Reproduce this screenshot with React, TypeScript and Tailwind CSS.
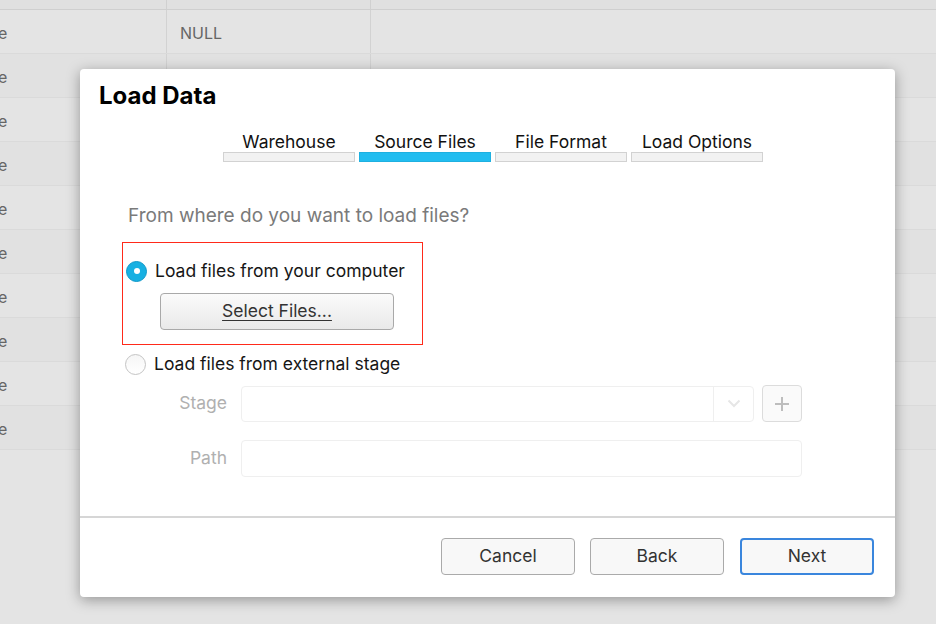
import React from "react";

const rows = Array.from({ length: 10 }, (_, i) => i);

function Tab({ label, active }: { label: string; active?: boolean }) {
  return (
    <div className="flex flex-col items-center w-[132px]">
      <div className="text-[17.5px] leading-[20px] text-[#111]">{label}</div>
      <div
        className={
          active
            ? "w-full h-[10px] bg-[#22bdf0] border border-[#1fb0e0]"
            : "w-full h-[10px] bg-[#f2f2f2] border border-[#d2d2d2]"
        }
      />
    </div>
  );
}

export default function App() {
  return (
    <div
      className="relative w-[936px] h-[624px] overflow-hidden bg-[#e4e4e4]"
      style={{ fontFamily: "Inter, 'Noto Sans', 'Liberation Sans', sans-serif" }}
    >
      {/* background grid */}
      <div className="flex flex-col">
        <div className="h-[10px] flex border-b border-[#cfcfcf] bg-[#e0e0e0]">
          <div className="w-[167px] border-r border-[#d0d0d0]" />
          <div className="w-[204px] border-r border-[#d0d0d0]" />
          <div className="flex-1" />
        </div>
        {rows.map((i) => (
          <div
            key={i}
            className={
              "h-[44px] flex border-b border-[#dadada] " +
              (i % 2 === 0 ? "bg-[#e4e4e4]" : "bg-[#e1e1e1]")
            }
          >
            <div className="w-[167px] border-r border-[#d2d2d2] flex items-center pt-[3px] overflow-hidden">
              <span className="text-[16px] text-[#666] ml-[-2px]">e</span>
            </div>
            <div className="w-[204px] border-r border-[#d2d2d2] flex items-center pt-[3px] pl-[13px]">
              {i === 0 && <span className="text-[16px] text-[#666]">NULL</span>}
            </div>
            <div className="flex-1" />
          </div>
        ))}
      </div>

      {/* dialog */}
      <div className="absolute left-[80px] top-[69px] w-[815px] h-[528px] bg-white rounded-[4px] shadow-[0_3px_14px_rgba(0,0,0,0.35)] flex flex-col">
        <div className="px-[19px] pt-[13px]">
          <h1 className="text-[24px] leading-[28px] font-bold text-black">Load Data</h1>
        </div>
        <div className="flex justify-center gap-[4px] mt-[22px] ml-[11px]">
          <Tab label="Warehouse" />
          <Tab label="Source Files" active />
          <Tab label="File Format" />
          <Tab label="Load Options" />
        </div>

        <div className="pl-[48px] mt-[43px] text-[19px] leading-[22px] text-[#7a7a7a]">
          From where do you want to load files?
        </div>

        <div className="ml-[42px] mt-[15px] w-[301px] h-[103px] border border-[#ff2a1a] flex flex-col pt-[17px] pl-[3px]">
          <div className="flex items-center gap-[8px]">
            <div className="w-[21px] h-[21px] rounded-full bg-[#17b0e2] border border-[#1098c8] flex items-center justify-center">
              <div className="w-[6px] h-[6px] rounded-full bg-white" />
            </div>
            <span className="text-[17.5px] leading-[22px] text-[#161616]">Load files from your computer</span>
          </div>
          <button className="mt-[11px] ml-[34px] w-[234px] h-[37px] rounded-[4px] border border-[#a9a9a9] bg-gradient-to-b from-[#fbfbfb] to-[#e9e9e9] text-[17.5px] text-[#333] underline underline-offset-[3px]">
            Select Files...
          </button>
        </div>

        <div className="ml-[45px] mt-[8px] flex items-center gap-[8px]">
          <div className="w-[21px] h-[21px] rounded-full bg-gradient-to-b from-[#f6f6f6] to-white border border-[#c4c4c4]" />
          <span className="text-[17.5px] leading-[22px] text-[#161616]">Load files from external stage</span>
        </div>

        <div className="mt-[10px] flex flex-col gap-[18px]">
          <div className="flex items-center">
            <div className="w-[147px] text-right text-[17.5px] text-[#b0b0b0]">Stage</div>
            <div className="ml-[14px] w-[513px] h-[36px] rounded-[4px] border border-[#efefef] flex">
              <div className="flex-1" />
              <div className="w-[40px] border-l border-[#efefef] flex items-center justify-center">
                <svg width="14" height="9" viewBox="0 0 14 9" fill="none">
                  <path d="M1.5 1.5 L7 7 L12.5 1.5" stroke="#e6e6e6" strokeWidth="2" />
                </svg>
              </div>
            </div>
            <div className="ml-[8px] w-[40px] h-[37px] rounded-[4px] border border-[#dcdcdc] bg-[#fafafa] flex items-center justify-center">
              <svg width="16" height="16" viewBox="0 0 16 16">
                <path d="M8 1 V15 M1 8 H15" stroke="#bdbdbd" strokeWidth="2" />
              </svg>
            </div>
          </div>
          <div className="flex items-center">
            <div className="w-[147px] text-right text-[17.5px] text-[#b0b0b0]">Path</div>
            <div className="ml-[14px] w-[561px] h-[37px] rounded-[4px] border border-[#efefef]" />
          </div>
        </div>

        <div className="mt-auto border-t-2 border-[#d6d6d6] h-[81px] flex justify-end items-start pt-[20px] pr-[21px] gap-[15px]">
          <button className="w-[134px] h-[37px] rounded-[4px] border border-[#aaaaaa] bg-[#f8f8f8] text-[17.5px] text-[#333]">
            Cancel
          </button>
          <button className="w-[134px] h-[37px] rounded-[4px] border border-[#aaaaaa] bg-[#f8f8f8] text-[17.5px] text-[#333]">
            Back
          </button>
          <button className="w-[134px] h-[37px] rounded-[4px] border-2 border-[#3a86dd] bg-[#f8f8f8] text-[17.5px] text-[#333] ml-[1px]">
            Next
          </button>
        </div>
      </div>
    </div>
  );
}
